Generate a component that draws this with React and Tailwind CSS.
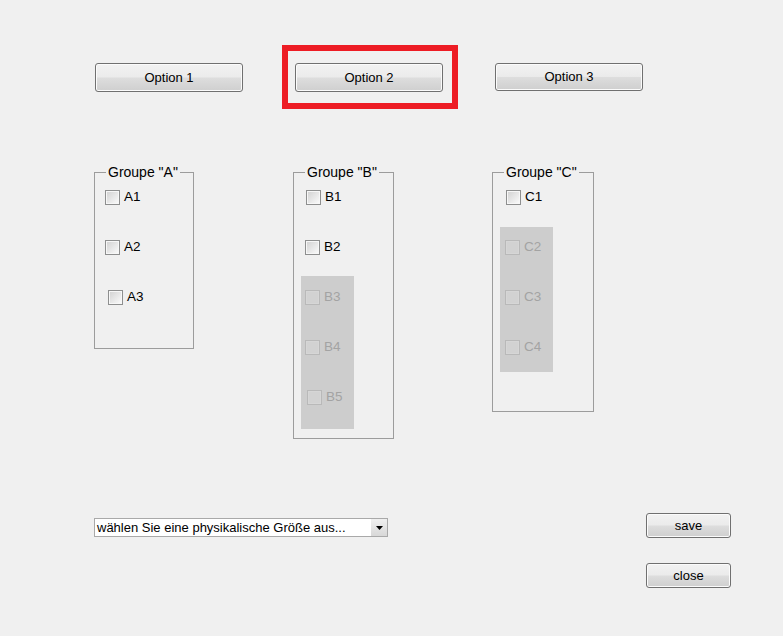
import React from "react";

// Push button with the classic two-tone face
const PushButton = ({ className = "", children }) => (
  <div
    className={
      "flex items-center justify-center rounded-[3px] border border-[#707070] bg-[linear-gradient(#f2f2f2,#ebebeb_48%,#dddddd_52%,#cfcfcf)] shadow-[inset_0_0_0_1px_#fbfbfb] text-[13px] text-black " +
      className
    }
  >
    {children}
  </div>
);

const Box = ({ disabled }) =>
  disabled ? (
    <div className="w-[15px] h-[15px] border border-[#b9b9b9] p-px bg-[#d6d6d6]">
      <div className="w-full h-full bg-[#d2d2d2]" />
    </div>
  ) : (
    <div className="w-[15px] h-[15px] border border-[#8e8f8f] p-px bg-[#f7f7f7]">
      <div className="w-full h-full bg-linear-to-br from-[#d4d4d4] to-[#f9f9f9]" />
    </div>
  );

const Check = ({ label, disabled, className = "" }) => (
  <label className={"flex items-center gap-[4px] h-[15px] text-[13.5px] " + className}>
    <Box disabled={disabled} />
    <span className={disabled ? "text-[#a3a3a3]" : "text-black"}>{label}</span>
  </label>
);

const Group = ({ title, className = "", children }) => (
  <fieldset className={"border border-[#9c9c9c] px-0 pb-0 " + className}>
    <legend className="ml-[11px] px-[2px] text-[14px] leading-[15px]">{title}</legend>
    {children}
  </fieldset>
);

export default function App() {
  return (
    <div className="w-[783px] h-[636px] overflow-hidden bg-[#f0f0f0] font-['Liberation_Sans',Arial,sans-serif] text-black">
      {/* option buttons */}
      <div className="flex items-start pt-[45px] pl-[95px]">
        <PushButton className="mt-[18px] w-[148px] h-[29px]">Option 1</PushButton>
        <div className="ml-[39px] border-[6px] border-[#ed1c24] pl-[7px] pr-[9px] pt-[12px] pb-[11px]">
          <PushButton className="w-[148px] h-[29px]">Option 2</PushButton>
        </div>
        <PushButton className="ml-[37px] mt-[18px] w-[148px] h-[28px]">Option 3</PushButton>
      </div>

      {/* check box groups */}
      <div className="flex items-start mt-[56px] pl-[94px]">
        <Group title={'Groupe "A"'} className="w-[100px] h-[184px]">
          <div className="flex flex-col gap-[35px] mt-[10px]">
            <Check label="A1" className="ml-[10px]" />
            <Check label="A2" className="ml-[10px]" />
            <Check label="A3" className="ml-[13px]" />
          </div>
        </Group>

        <Group title={'Groupe "B"'} className="ml-[99px] w-[101px] h-[274px]">
          <div className="flex flex-col mt-[10px]">
            <Check label="B1" className="ml-[12px]" />
            <Check label="B2" className="ml-[11px] mt-[35px]" />
            <div className="ml-[7px] mt-[21px] w-[53px] h-[153px] bg-[#cdcdcd] pt-[14px] flex flex-col gap-[35px]">
              <Check label="B3" disabled className="ml-[4px]" />
              <Check label="B4" disabled className="ml-[4px]" />
              <Check label="B5" disabled className="ml-[6px]" />
            </div>
          </div>
        </Group>

        <Group title={'Groupe "C"'} className="ml-[98px] w-[102px] h-[247px]">
          <div className="flex flex-col mt-[10px]">
            <Check label="C1" className="ml-[13px]" />
            <div className="ml-[7px] mt-[22px] w-[53px] h-[145px] bg-[#cdcdcd] pt-[13px] flex flex-col gap-[35px]">
              <Check label="C2" disabled className="ml-[5px]" />
              <Check label="C3" disabled className="ml-[5px]" />
              <Check label="C4" disabled className="ml-[5px]" />
            </div>
          </div>
        </Group>
      </div>

      {/* quantity picker and actions */}
      <div className="flex items-start mt-[74px] pl-[94px] pr-[52px]">
        <div className="mt-[5px] w-[294px] h-[19px] flex border border-[#a9a9a9] bg-white">
          <div className="flex-1 flex items-center pl-[2px] text-[13px] whitespace-nowrap overflow-hidden">
            wählen Sie eine physikalische Größe aus...
          </div>
          <div className="w-[16px] h-full flex items-center justify-center bg-linear-to-b from-[#f0f0f0] to-[#d8d8d8]">
            <svg width="7" height="4" viewBox="0 0 7 4">
              <path d="M0 0h7L3.5 4z" fill="#000" />
            </svg>
          </div>
        </div>
        <div className="ml-auto flex flex-col gap-[25px]">
          <PushButton className="w-[85px] h-[25px]">save</PushButton>
          <PushButton className="w-[85px] h-[25px]">close</PushButton>
        </div>
      </div>
    </div>
  );
}
